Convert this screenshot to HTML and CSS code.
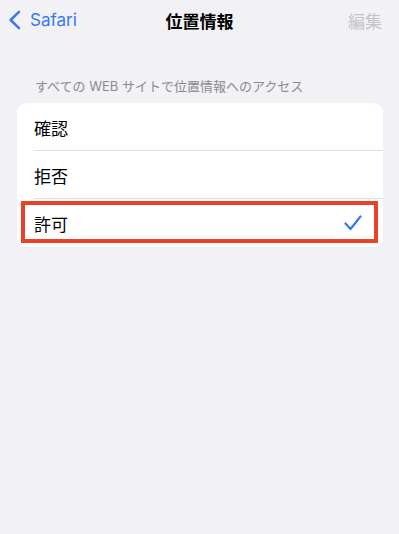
FILE: index.html
```html
<!DOCTYPE html>
<html lang="ja">
<head>
<meta charset="utf-8">
<link rel="stylesheet" href="styles.css">
</head>
<body>
<div class="nav">
  <div class="back">
    <svg class="chev" width="13" height="20" viewBox="0 0 13 20"><path d="M11 1.8 L2.6 10 L11 18.2" fill="none" stroke="#3478F6" stroke-width="2.5" stroke-linecap="round" stroke-linejoin="round"/></svg>
    <span>Safari</span>
  </div>
  <div class="title">位置情報</div>
  <div class="edit">編集</div>
</div>
<div class="section-header">すべての WEB サイトで位置情報へのアクセス</div>
<div class="card">
  <div class="row"><span class="label">確認</span></div>
  <div class="row"><span class="label">拒否</span></div>
  <div class="row last">
    <span class="label">許可</span>
    <svg class="check" width="18" height="16" viewBox="0 0 18 16"><path d="M1.5 8.5 L6.5 14 L16.5 1.5" fill="none" stroke="#3478F6" stroke-width="2.2" stroke-linecap="round" stroke-linejoin="round"/></svg>
    <div class="highlight"></div>
  </div>
</div>
</body>
</html>
```
FILE: styles.css
```css
html, body {
  margin: 0;
  padding: 0;
}
body {
  background: #F2F1F6;
  font-family: "Inter", "Noto Sans CJK JP", sans-serif;
  width: 399px;
  height: 534px;
  overflow: hidden;
}
.nav {
  height: 40px;
  display: flex;
  align-items: center;
  justify-content: space-between;
  padding: 0 17px 0 8px;
  position: relative;
}
.back {
  display: flex;
  align-items: center;
  gap: 9px;
  color: #3478F6;
  font-size: 17px;
}
.title {
  position: absolute;
  left: 0;
  right: 0;
  text-align: center;
  font-size: 17px;
  font-weight: 700;
  color: #000;
  pointer-events: none;
}
.edit {
  color: #C4C4C7;
  font-size: 17px;
}
.section-header {
  margin-top: 38px;
  padding-left: 35px;
  font-size: 13px;
  color: #8A8A8E;
  line-height: 16px;
}
.card {
  margin: 9px 16px 0 17px;
  background: #fff;
  border-radius: 10px;
  overflow: hidden;
}
.row {
  height: 48px;
  display: flex;
  align-items: center;
  justify-content: space-between;
  padding: 0 21px 0 17px;
  position: relative;
}
.row::after {
  content: "";
  position: absolute;
  left: 17px;
  right: 0;
  bottom: 0;
  height: 1px;
  background: #E0E0E4;
}
.row.last::after {
  display: none;
}
.label {
  font-size: 17px;
  color: #000;
}
.highlight {
  position: absolute;
  left: 4px;
  right: 5px;
  top: 2px;
  height: 42px;
  border: 4px solid #EA4128;
  box-sizing: border-box;
}
```
